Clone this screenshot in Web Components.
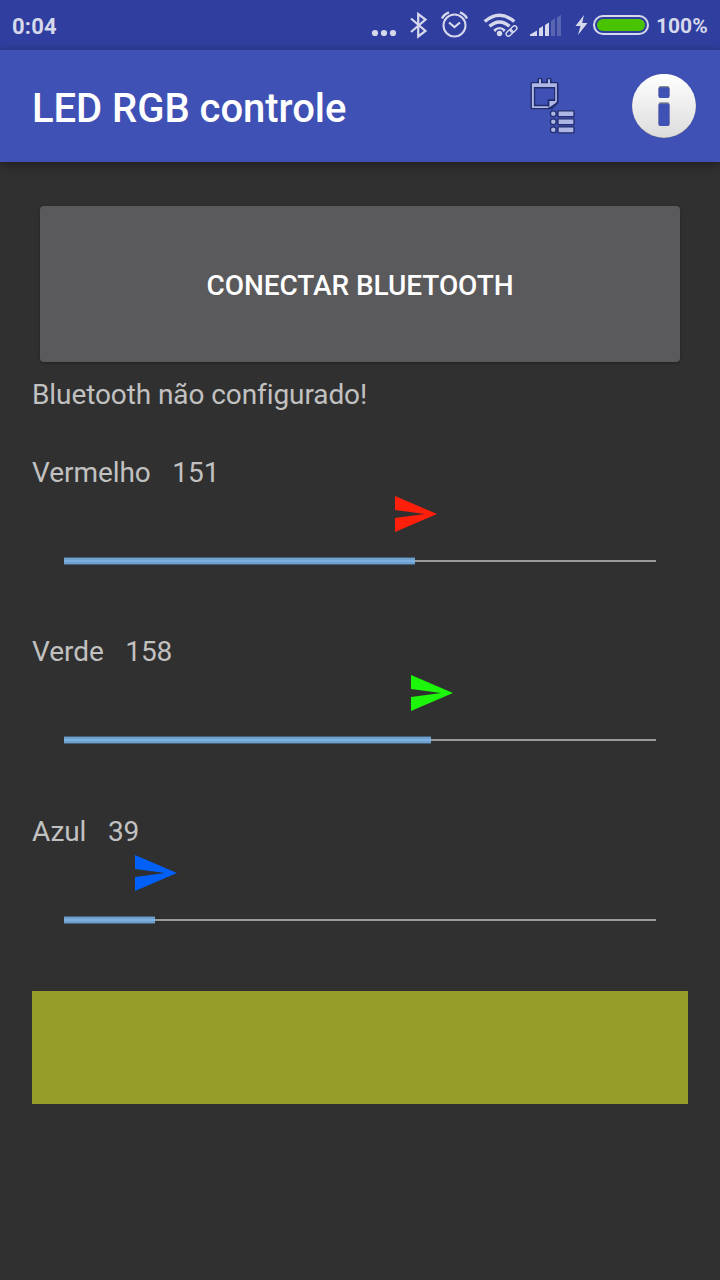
<!DOCTYPE html>
<html lang="pt">
<head>
<meta charset="utf-8">
<title>LED RGB controle</title>
<style>
html,body{margin:0;background:#303030}
body{font-family:Roboto,"Noto Sans",sans-serif;width:720px;height:1280px;overflow:hidden}
</style>
</head>
<body>
<led-app></led-app>
<script>
const define = (name, html) => {
  const t = document.createElement('template');
  t.innerHTML = html;
  customElements.define(name, class extends HTMLElement {
    constructor() {
      super();
      this.attachShadow({mode: 'open'}).append(t.content.cloneNode(true));
    }
  });
};

define('status-bar', `
<style>
:host{display:flex;align-items:center;height:50px;background:#303f9f;color:#d6d9ec;font-weight:700;font-size:22px;line-height:50px;padding:0 12px;box-sizing:border-box}
.time{flex:1;padding-top:3px;letter-spacing:.2px}
svg{display:block;flex:none;width:290px;height:50px}
.pct{width:54px;flex:none;padding-top:2px;margin-right:-2px;font-size:21px;white-space:nowrap}
</style>
<span class="time">0:04</span>
<svg viewBox="366 0 290 50" fill="none" stroke="#d6d9ec">
  <g fill="#d6d9ec" stroke="none"><circle cx="375" cy="33" r="3.1"/><circle cx="384" cy="33" r="3.1"/><circle cx="393" cy="33" r="3.1"/></g>
  <path d="M411 18.500L425.500 31l-7.300 5.500V14l7.300 5.500L411 32" stroke-width="2.200"/>
  <circle cx="454.500" cy="25.500" r="11" stroke-width="2"/>
  <path d="M449 22.500l5.500 4.500 5.500-4.500" stroke-width="2.200"/>
  <path d="M442 18.500q2-4.500 7-6.200M467 18.500q-2-4.500-7-6.200" stroke-width="2.400"/>
  <path d="M484.700 21.500q14.800-12.500 29.600 0M489.500 26.300q10-8.600 20 0" stroke-width="3.400"/>
  <path d="M494.300 31q5.200-4.600 10.400 0" stroke-width="3.200"/>
  <circle cx="499.500" cy="33.500" r="4.200" fill="#303f9f" stroke="none"/>
  <circle cx="499.500" cy="33.500" r="2.700" fill="#d6d9ec" stroke="none"/>
  <g transform="translate(511.500 31) rotate(-43)" stroke-width="1.400"><rect x="-6.500" y="-2.300" width="7.300" height="4.600" rx="2.300"/><rect x="-.8" y="-2.300" width="7.300" height="4.600" rx="2.300"/></g>
  <g fill="#d6d9ec" stroke="none">
    <path d="M530 36v-1.500l7-4V36zM539 36v-7.500l4-2.500v10zM545 36V25l4-2.500V36z"/>
    <path d="M551 36V21l4-2.700V36zM557 36V17.500l4-2.700V36z" opacity=".25"/>
    <path d="M584 15l-8.500 11h5l-2.500 9 9.500-12h-5.300z"/>
  </g>
  <rect x="594" y="16" width="54" height="18" rx="9" stroke-width="2"/>
  <rect x="597" y="19" width="48" height="12" rx="6" fill="#4ac400" stroke="none"/>
</svg>
<span class="pct">100%</span>`);

define('app-bar', `
<style>
:host{display:flex;align-items:center;height:112px;box-sizing:border-box;background:#3f51b5;color:#fff;padding:0 24px 0 32px;box-shadow:0 2px 10px rgba(0,0,0,.42);position:relative}
h1{font-size:40px;font-weight:500;line-height:48px;letter-spacing:-.04px;margin:6px auto 0 0;white-space:nowrap}
svg{display:block;flex:none}
.list{margin-right:52px}
</style>
<h1><slot></slot></h1>
<svg class="list" width="56" height="64" viewBox="524 74 56 64">
  <path fill="#202c6b" d="M532 82h5.500v-3q0-1 1-1h3q1 0 1 1v3h4v-3q0-1 1-1h3q1 0 1 1v3h5.500q1.500 0 1.500 1.500V103l-6.500 6.300H532q-1.500 0-1.500-1.500V83.500q0-1.500 1.500-1.500z"/>
  <path fill="#adb6e4" d="M531.900 83.300H539V79.200h2v4.100h7V79.200h2v4.100h6.900v18.200h-1.700V87h-21.300v19.300h14.600v1.700h-16.600z"/>
  <path fill="#3f51b5" d="M535.200 88.500H554v10.800h-6.300v5.500h-12.500z"/>
  <path fill="#adb6e4" d="M549.400 107.500v-6.600h7v1.500z"/>
  <g fill="#adb6e4" stroke="#202c6b" stroke-width="1.300">
    <circle cx="553.300" cy="113.700" r="2.900"/><circle cx="553.300" cy="121.700" r="2.900"/><circle cx="553.300" cy="129.800" r="2.900"/>
    <rect x="558" y="110.800" width="16" height="5.900" rx=".6"/><rect x="558" y="118.800" width="16" height="5.900" rx=".6"/><rect x="558" y="126.900" width="16" height="5.900" rx=".6"/>
  </g>
</svg>
<svg width="64" height="64" viewBox="0 0 64 64">
  <defs><linearGradient id="disc" x2="0" y2="1"><stop stop-color="#fff"/><stop offset="1" stop-color="#dcdcdc"/></linearGradient></defs>
  <circle cx="32" cy="32.200" r="31.800" fill="#777"/>
  <circle cx="32" cy="31.800" r="31.900" fill="url(#disc)"/>
  <rect x="26.500" y="12.100" width="11" height="11.900" rx="2" fill="#888"/>
  <rect x="26.500" y="28.300" width="11" height="23.700" rx="2" fill="#888"/>
  <rect x="26.500" y="13.200" width="11" height="10.800" rx="2" fill="#3f51b5"/>
  <rect x="26.500" y="29.400" width="11" height="22.600" rx="2" fill="#3f51b5"/>
</svg>`);

define('raised-button', `
<style>
:host{display:block}
button{display:block;width:100%;height:156px;border:0;border-radius:4px;background:#5a5a5c;color:#fff;font:500 28px/33px Roboto,sans-serif;letter-spacing:-.07px;padding:3px 0 0;box-shadow:0 1px 3px rgba(0,0,0,.3)}
</style>
<button><slot></slot></button>`);

define('color-swatch', `
<style>:host{display:block;height:113px;background:var(--swatch)}</style>`);

customElements.define('color-slider', class extends HTMLElement {
  connectedCallback() {
    const a = n => this.getAttribute(n);
    this.attachShadow({mode: 'open'}).innerHTML = `
<style>
:host{display:block;height:179px}
.label{display:flex;gap:21.500px;line-height:38px;height:38px;letter-spacing:-.05px}
.thumb{display:block;width:42px;height:36px;margin:4px 0 0 calc(12px + var(--fill))}
.bar{display:flex;align-items:center;height:8px;margin:25px 32px 0}
.done{width:var(--fill);height:8px;background:linear-gradient(#456078 0 1px,#6fa1cf 1px 3px,#7cb0e0 3px 5px,#6fa1cf 5px 7px,#456078 7px)}
.rest{flex:1;height:2px;background:#9b9b9b}
</style>
<div class="label"><span>${a('label')}</span><span>${a('value')}</span></div>
<svg class="thumb" viewBox="0 0 42 36"><path fill="${a('color')}" d="M0 0L42 18 0 36V22L30 18 0 14z"/></svg>
<div class="bar"><div class="done"></div><div class="rest"></div></div>`;
    this.style.setProperty('--fill', a('fill') + 'px');
  }
});

define('led-app', `
<style>
:host{display:block;width:720px;height:1280px;background:#303030}
main{padding:44px 32px 0;color:#c1c1c1;font-size:28px}
raised-button{margin:0 8px}
.status{margin:14px 0 40px;line-height:38px;letter-spacing:-.09px}
color-slider:last-of-type{margin-top:1px;height:178px}
</style>
<status-bar></status-bar>
<app-bar>LED RGB controle</app-bar>
<main>
  <raised-button>CONECTAR BLUETOOTH</raised-button>
  <p class="status">Bluetooth não configurado!</p>
  <color-slider label="Vermelho" value="151" color="#ff1f0a" fill="351"></color-slider>
  <color-slider label="Verde" value="158" color="#1df50a" fill="367"></color-slider>
  <color-slider label="Azul" value="39" color="#0060f8" fill="91"></color-slider>
  <color-swatch style="--swatch:#979e27"></color-swatch>
</main>`);
</script>
</body>
</html>
